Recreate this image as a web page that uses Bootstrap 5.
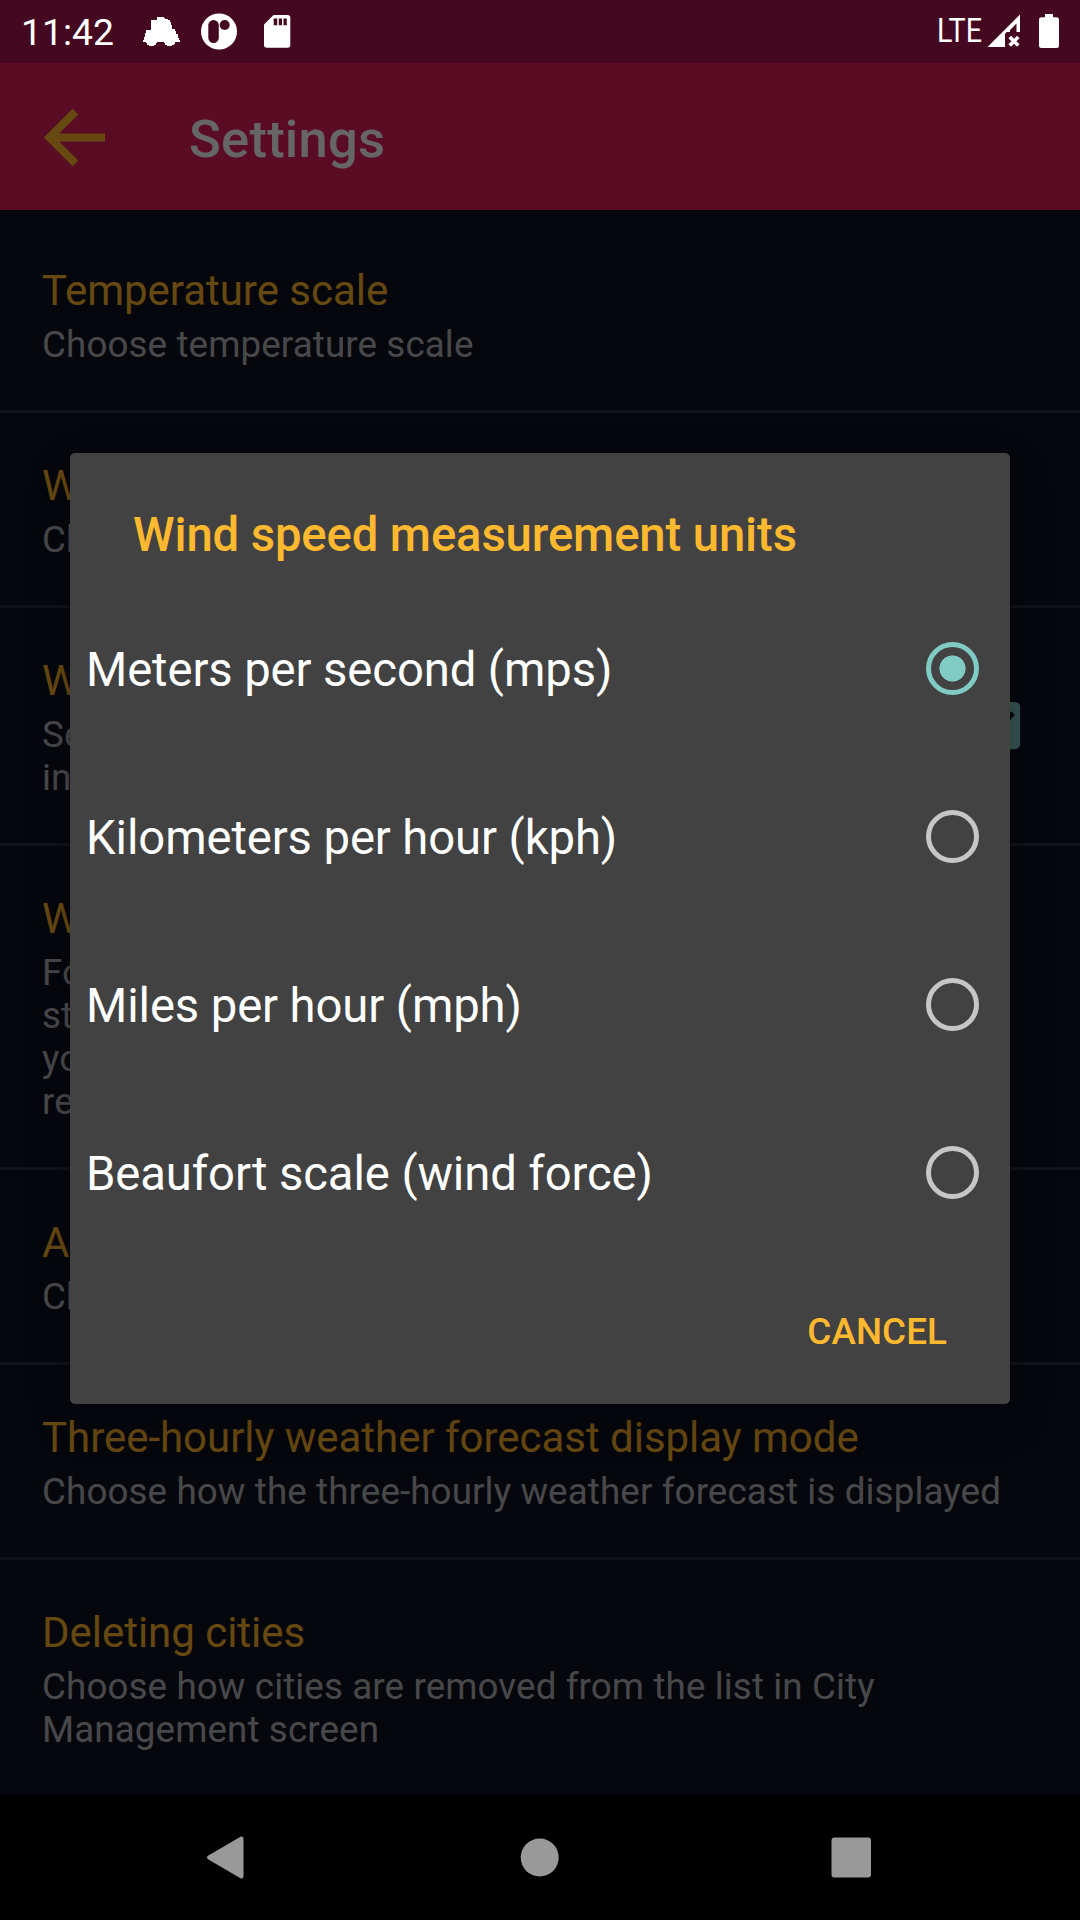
<!DOCTYPE html>
<html lang="en">
<head>
<meta charset="utf-8">
<meta name="viewport" content="width=device-width, initial-scale=1">
<title>Settings</title>
<link href="https://cdn.jsdelivr.net/npm/bootstrap@5.3.0/dist/css/bootstrap.min.css" rel="stylesheet">
<style>
  html, body { height: 1920px; overflow: hidden; }
  body { background: #000; font-family: Roboto, "Noto Sans", sans-serif; color: #fff; }
  .phone { width: 1080px; height: 1920px; }
  .statusbar { height: 63px; background: #440820; z-index: 3; padding: 0 20px 0 21px; }
  .clock { font-size: 37.3px; line-height: 63px; width: 121px; padding-top: 2px; }
  .disc-sd-icons { margin-left: 21px; }
  .appbar { height: 147px; background: #e41e5c; padding-left: 42px; }
  .appbar h1 { font-size: 52.5px; font-weight: 500; line-height: 62px; margin: 4px 0 0 81px; letter-spacing: .25px; }
  .prefs { background: #0d1221; padding-top: 8px; --bs-list-group-bg: transparent; --bs-list-group-border-radius: 0; }
  .prefs .pref { background: transparent; color: inherit; border: 0; border-bottom: 3px solid rgba(255,255,255,.12); padding: 48px 60px 44px 42px; }
  .prefs .pref:last-child { border-bottom: 0; }
  .pref-title { font-size: 42px; line-height: 49px; color: #ffb52d; margin-bottom: 8px; font-weight: 400; letter-spacing: -.03px; }
  .pref-text { font-size: 36.75px; line-height: 43px; color: rgba(255,255,255,.7); margin: 0; white-space: nowrap; letter-spacing: .11px; }
  .checkbox-icon { margin: 0 -8px 5px 0; }
  .scrim { background: rgba(0,0,0,.6); z-index: 1; }
  .dialog-layer { z-index: 2; padding-top: 453px; }
  .units-dialog { width: 940px; height: 951px; background: #424242; border-radius: 5px; box-shadow: 0 16px 40px rgba(0,0,0,.25); }
  .units-dialog h2 { font-size: 47.25px; line-height: 56px; font-weight: 500; color: #ffb92f; margin: 0; padding: 54px 0 21px 63px; letter-spacing: -.12px; }
  .unit-row { height: 168px; padding: 0 31px 0 16px; font-size: 47.25px; line-height: 56px; cursor: pointer; letter-spacing: -.11px; }
  .unit-row span { padding-top: 4px; }
  .unit-radio { appearance: none; width: 53px; height: 53px; border: 5.25px solid #c6c6c6; border-radius: 50%; margin: 0; }
  .unit-radio:checked { border-color: #80cbc4; background: radial-gradient(circle, #80cbc4 12.7px, transparent 13.4px); }
  .cancel-btn { color: #ffb92f; font-size: 36.75px; line-height: 44px; font-weight: 500; padding: 0; border: 0; margin: 54px 63px 0 0; letter-spacing: .1px; }
  .navbar-keys { height: 126px; background: #000; z-index: 3; }
</style>
</head>
<body>
<div class="phone position-relative d-flex flex-column overflow-hidden">

  <header class="statusbar position-relative d-flex align-items-center flex-shrink-0">
    <div class="clock">11:42</div>
    <svg width="38" height="63" viewBox="142 0 38 63" fill="#fff"><path d="M157 17H164V18H165V19H168V20H170V22H171V25H172V29H175V31H176V34H178V38H179V40H180V42H175V44H174V45H172V46H167V45H165V43H164V42H157V43H156V45H154V46H149V45H147V43H146V42H143V40H144V37H145V33H146V30H151V20H157z"/></svg>
    <svg class="disc-sd-icons me-auto" width="90" height="63" viewBox="201 0 90 63"><circle cx="219" cy="31.500" r="18" fill="#fff"/><rect x="208.300" y="20" width="10.500" height="23" rx="5.200" fill="#440820"/><circle cx="224.700" cy="25" r="5" fill="#440820"/><path fill="#fff" d="M273.500 15H287.500q2.800 0 2.800 2.800V45q0 2.800-2.800 2.800H266.800q-2.800 0-2.800-2.800V24.500z"/><path fill="#440820" d="M273.700 18.500h3.500v6.700h-3.500zM278.800 18.500h3.200v6.700h-3.200zM283.500 18.500h3.300v6.700h-3.300z"/></svg>
    <svg width="123" height="63" viewBox="937 0 123 63" fill="#fff"><text x="937" y="42" font-family="Roboto" font-size="32.500" textLength="45" lengthAdjust="spacingAndGlyphs">LTE</text><path fill-rule="evenodd" d="M1020 14.500V32h-3.500V23.500L1010 30v2h-3.300l-1.700 2V47h-17.500z"/><path d="M1009.700 37l8.600 8.600M1018.300 37l-8.600 8.600" stroke="#fff" stroke-width="3.600"/><path d="M1045 14h8v3.300h3.500q2.500 0 2.500 2.500V45.500q0 2.500-2.500 2.500h-15q-2.500 0-2.500-2.500V19.800q0-2.500 2.500-2.500h3.500z"/></svg>
  </header>

  <nav class="appbar d-flex align-items-center flex-shrink-0">
    <svg width="66" height="60" viewBox="42 107 66 60" fill="none" stroke="#ffb92d" stroke-width="8"><path d="M105 137.500H50M75.500 111.700L49.500 137.500L75.500 163.300"/></svg>
    <h1>Settings</h1>
  </nav>

  <main class="prefs list-group list-group-flush flex-grow-1">
    <div class="list-group-item pref"><h2 class="pref-title">Temperature scale</h2><p class="pref-text">Choose temperature scale</p></div>
    <div class="list-group-item pref"><h2 class="pref-title">W</h2><p class="pref-text">Ch</p></div>
    <div class="list-group-item pref d-flex justify-content-between align-items-center">
      <div><h2 class="pref-title">W</h2><p class="pref-text">Se<br>in</p></div>
      <svg class="checkbox-icon" width="63" height="63" viewBox="0 0 24 24" fill="#80cbc4"><path d="M19 3H5c-1.110 0-2 .9-2 2v14c0 1.100.89 2 2 2h14c1.110 0 2-.9 2-2V5c0-1.100-.89-2-2-2zm-9 14l-5-5 1.410-1.410L10 14.170l7.590-7.590L19 8l-9 9z"/></svg>
    </div>
    <div class="list-group-item pref"><h2 class="pref-title">W</h2><p class="pref-text">Fo<br>st<br>yo<br>re</p></div>
    <div class="list-group-item pref"><h2 class="pref-title">A</h2><p class="pref-text">Ch</p></div>
    <div class="list-group-item pref"><h2 class="pref-title">Three-hourly weather forecast display mode</h2><p class="pref-text">Choose how the three-hourly weather forecast is displayed</p></div>
    <div class="list-group-item pref"><h2 class="pref-title">Deleting cities</h2><p class="pref-text">Choose how cities are removed from the list in City<br>Management screen</p></div>
  </main>

  <div class="scrim position-absolute top-0 start-0 w-100 h-100"></div>

  <div class="dialog-layer position-absolute top-0 start-0 w-100 d-flex justify-content-center">
    <section class="units-dialog d-flex flex-column" role="dialog" aria-label="Wind speed measurement units">
      <h2>Wind speed measurement units</h2>
      <label class="unit-row d-flex align-items-center justify-content-between"><span>Meters per second (mps)</span><input class="unit-radio" type="radio" name="unit" checked></label>
      <label class="unit-row d-flex align-items-center justify-content-between"><span>Kilometers per hour (kph)</span><input class="unit-radio" type="radio" name="unit"></label>
      <label class="unit-row d-flex align-items-center justify-content-between"><span>Miles per hour (mph)</span><input class="unit-radio" type="radio" name="unit"></label>
      <label class="unit-row d-flex align-items-center justify-content-between"><span>Beaufort scale (wind force)</span><input class="unit-radio" type="radio" name="unit"></label>
      <button type="button" class="cancel-btn btn align-self-end">CANCEL</button>
    </section>
  </div>

  <footer class="navbar-keys position-relative flex-shrink-0">
    <svg class="d-block" width="1080" height="126" viewBox="0 1794.500 1080 126" fill="#999" stroke="#999" stroke-linejoin="round"><path d="M209 1857L241.500 1838V1876z" stroke-width="4"/><circle cx="539.700" cy="1857" r="19" stroke="none"/><rect x="831.500" y="1837" width="39.500" height="40" rx="3" stroke="none"/></svg>
  </footer>
</div>
<script src="https://cdn.jsdelivr.net/npm/bootstrap@5.3.0/dist/js/bootstrap.bundle.min.js"></script>
</body>
</html>
